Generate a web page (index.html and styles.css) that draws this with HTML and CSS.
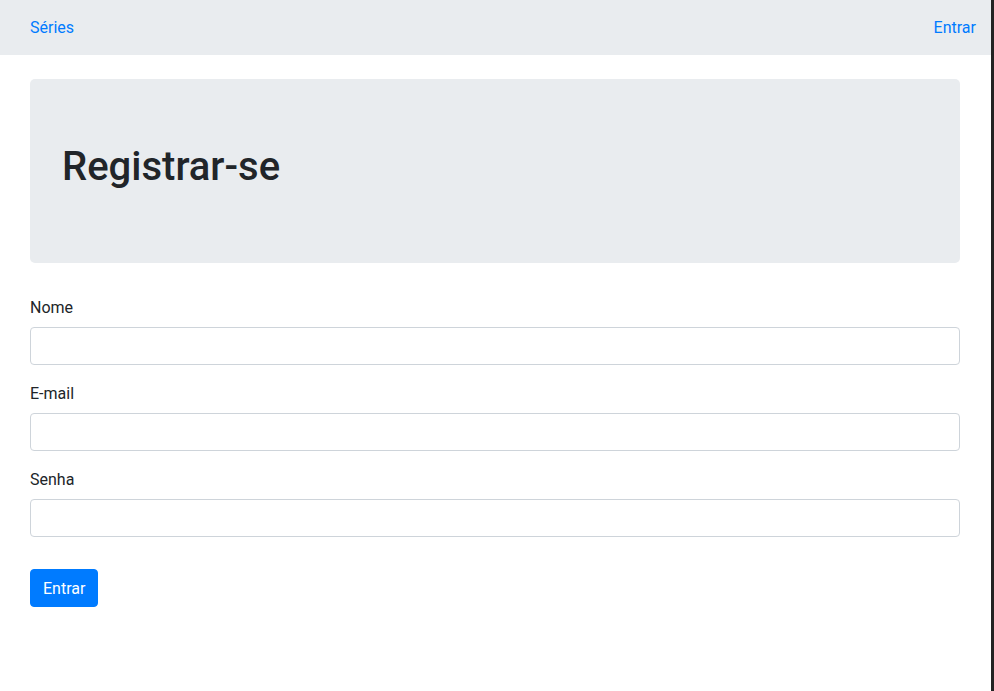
FILE: index.html
```html
<!DOCTYPE html>
<html lang="pt">
<head>
<meta charset="utf-8">
<title>Registrar-se</title>
<link rel="stylesheet" href="styles.css">
</head>
<body>
<div class="page">
  <nav class="navbar">
    <a class="nav-link" href="#">Séries</a>
    <a class="nav-link" href="#">Entrar</a>
  </nav>
  <div class="container">
    <div class="jumbotron">
      <h1>Registrar-se</h1>
    </div>
    <form class="form">
      <div class="form-group">
        <label for="nome">Nome</label>
        <input id="nome" type="text" class="form-control">
      </div>
      <div class="form-group">
        <label for="email">E-mail</label>
        <input id="email" type="email" class="form-control">
      </div>
      <div class="form-group">
        <label for="senha">Senha</label>
        <input id="senha" type="password" class="form-control">
      </div>
      <button type="submit" class="btn">Entrar</button>
    </form>
  </div>
</div>
<div class="edge"></div>
</body>
</html>
```

FILE: styles.css
```css
* { box-sizing: border-box; }
html, body { height: 100%; }
body {
  margin: 0;
  display: flex;
  font-family: Roboto, "Liberation Sans", sans-serif;
  font-size: 16px;
  line-height: 1.5;
  color: #212529;
  background: #fff;
}
.page { flex: 1; min-width: 0; }
.edge { width: 3px; background: #232323; flex: none; }
.navbar {
  height: 55px;
  background: #e9ecef;
  display: flex;
  align-items: center;
  justify-content: space-between;
  padding: 1px 15px 0 30px;
}
.nav-link { color: #007bff; text-decoration: none; }
.container {
  width: 960px;
  margin: 0 0 0 15px;
  padding: 24px 15px 0;
}
.jumbotron {
  background: #e9ecef;
  border-radius: 5px;
  padding: 64px 32px;
  margin-bottom: 32px;
}
.jumbotron h1 {
  margin: 0 0 8px;
  font-size: 40px;
  font-weight: 500;
  line-height: 1.2;
}
.form-group { margin-bottom: 16px; }
.form-group label { display: block; padding-top: 1px; margin-bottom: 7px; }
.form-control {
  display: block;
  width: 100%;
  height: 38px;
  padding: 6px 12px;
  font: inherit;
  border: 1px solid #ced4da;
  border-radius: 4px;
  background: #fff;
}
.btn {
  margin-top: 16px;
  font: inherit;
  color: #fff;
  background: #007bff;
  border: 1px solid #007bff;
  border-radius: 4px;
  padding: 7px 12px 5px;
  line-height: 1.5;
}
```
